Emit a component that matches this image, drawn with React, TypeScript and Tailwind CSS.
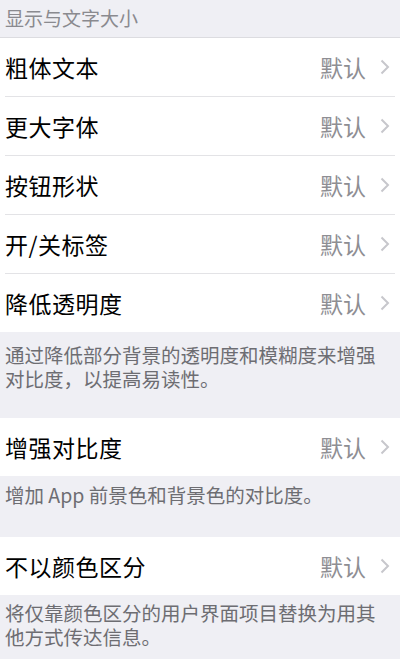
const font = { fontFamily: '"Noto Sans CJK SC", "Noto Sans", sans-serif' };

function Chevron() {
  return (
    <svg width="10" height="16" viewBox="0 0 10 16" className="ml-[14px]">
      <path d="M1.5 1.5 L8 8 L1.5 14.5" fill="none" stroke="#c7c7cc" strokeWidth="2" />
    </svg>
  );
}

function Row({ label, last }: { label: string; last?: boolean }) {
  return (
    <div className="bg-white">
      <div className="h-[58px] flex items-center pl-[5px] pr-[10px]">
        <span className="flex-1 text-[23px] text-black tracking-[0.5px]">{label}</span>
        <span className="text-[23px] text-[#8e8e93]">默认</span>
        <Chevron />
      </div>
      {!last && <div className="mx-[5px] h-px bg-[#e3e3e6]" />}
    </div>
  );
}

function Note({ children, className }: { children: React.ReactNode; className?: string }) {
  return (
    <div className={`bg-[#efeff4] px-[5px] text-[19.5px] leading-[24px] text-[#6d6d72] ${className ?? ""}`}>
      {children}
    </div>
  );
}

export default function App() {
  return (
    <div className="w-[400px] h-[659px] overflow-hidden bg-[#efeff4]" style={font}>
      <div className="h-[38px] px-[5px] flex items-center text-[19px] text-[#8a8a8f] border-b border-[#dcdce0]">
        显示与文字大小
      </div>
      <Row label="粗体文本" />
      <Row label="更大字体" />
      <Row label="按钮形状" />
      <Row label="开/关标签" />
      <Row label="降低透明度" last />
      <Note className="h-[86px] pt-[11px]">
        通过降低部分背景的透明度和模糊度来增强
        <br />
        对比度，以提高易读性。
      </Note>
      <Row label="增强对比度" last />
      <Note className="h-[61px] pt-[7px]">增加 App 前景色和背景色的对比度。</Note>
      <Row label="不以颜色区分" last />
      <Note className="h-[62px] pt-[6px]">
        将仅靠颜色区分的用户界面项目替换为用其
        <br />
        他方式传达信息。
      </Note>
    </div>
  );
}
